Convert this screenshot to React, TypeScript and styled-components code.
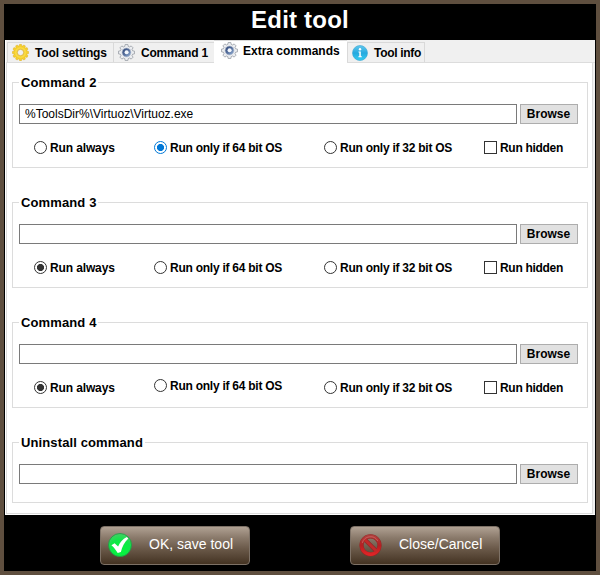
import React from 'react';
import styled, { createGlobalStyle } from 'styled-components';

const GlobalStyle = createGlobalStyle`
  * { box-sizing: border-box; }
  body { margin: 0; background: #5f4f3f; font-family: "Liberation Sans", Arial, sans-serif; color: #000; }
`;

const Frame = styled.div`
  width: 600px;
  height: 575px;
  border: 4px solid #5f4f3f;
  background: #000;
  display: flex;
  flex-direction: column;
`;

const Title = styled.h1`
  margin: 0;
  height: 36px;
  line-height: 32px;
  font-size: 24px;
  font-weight: bold;
  letter-spacing: 0.2px;
  color: #fff;
  text-align: center;
`;

const Body = styled.div`
  margin: 0 1px;
  height: 475px;
  background: #f0f0f0;
  display: flex;
  flex-direction: column;
  border-left: 1px solid #fff;
  border-bottom: 1px solid #fff;
`;

const TabBar = styled.div`
  height: 23px;
  padding-left: 1px;
  display: flex;
  align-items: flex-end;
`;

const Tab = styled.div<{ $width: number; $active?: boolean; $spacing: number }>`
  width: ${p => p.$width}px;
  height: ${p => (p.$active ? 23 : 21)}px;
  padding: 0 0 ${p => (p.$active ? 2 : 0)}px ${p => (p.$active ? 7 : 4)}px;
  display: flex;
  align-items: center;
  background: ${p => (p.$active ? '#fff' : '#f0f0f0')};
  border: 1px solid #d9d9d9;
  border-left-width: ${p => (p.$active ? 0 : 1)}px;
  border-right-width: ${p => (p.$active ? 0 : 1)}px;
  border-bottom-color: ${p => (p.$active ? '#fff' : '#d9d9d9')};
  margin-right: ${p => (p.$active ? 0 : -1)}px;
  font-size: 12px;
  font-weight: bold;
  letter-spacing: ${p => p.$spacing}px;
  white-space: nowrap;

  svg { flex: none; margin-right: ${p => (p.$active ? 5 : 6)}px; }
`;

const Panel = styled.div`
  flex: 1;
  margin-right: 2px;
  background: #fff;
  border: 1px solid #dcdcdc;
  border-top: 0;
  padding: 12px 4px 0 5px;
  display: flex;
  flex-direction: column;
  gap: 27px;
`;

const PanelTop = styled.div`
  height: 1px;
  margin-top: -1px;
  background: linear-gradient(90deg, #dcdcdc 208px, transparent 208px, transparent 341px, #dcdcdc 341px);
`;

const Group = styled.fieldset<{ $height: number }>`
  height: ${p => p.$height}px;
  min-width: 0;
  margin: 0;
  padding: 0 9px 0 6px;
  border: 1px solid #dcdcdc;
`;

const Legend = styled.legend<{ $spacing: number }>`
  height: 15px;
  line-height: 15px;
  padding: 0 2px;
  font-size: 13px;
  font-weight: bold;
  letter-spacing: ${p => p.$spacing}px;
`;

const PathRow = styled.div`
  display: flex;
  gap: 3px;
  padding-top: 14px;
`;

const PathInput = styled.input`
  width: 498px;
  height: 20px;
  margin: 0;
  padding: 0 5px;
  border: 1px solid #7a7a7a;
  border-radius: 0;
  outline: 0;
  background: #fff;
  color: #000;
  font: 12px "Liberation Sans", Arial, sans-serif;
  letter-spacing: 0;
`;

const Browse = styled.button`
  width: 58px;
  height: 20px;
  padding: 0 1px 0 0;
  border: 1px solid #adadad;
  background: #e1e1e1;
  color: #000;
  font: bold 12px "Liberation Sans", Arial, sans-serif;
  letter-spacing: 0;
`;

const Options = styled.div`
  height: 20px;
  margin-top: 14px;
  padding-left: 15px;
  display: grid;
  grid-template-columns: 120px 170px 160px 1fr;
  align-items: center;
`;

const Option = styled.label<{ $raised?: boolean; $spacing: number }>`
  display: flex;
  align-items: center;
  gap: 3px;
  height: 15px;
  margin-bottom: ${p => (p.$raised ? 5 : 1)}px;
  font-size: 12px;
  font-weight: bold;
  letter-spacing: ${p => p.$spacing}px;
  white-space: nowrap;
`;

const Radio = styled.span<{ $state: 'off' | 'on' | 'focus' }>`
  flex: none;
  width: 13px;
  height: 13px;
  border-radius: 50%;
  border: 1px solid ${p => (p.$state === 'focus' ? '#0078d7' : '#333')};
  background: ${p =>
    p.$state === 'off'
      ? '#fff'
      : `radial-gradient(circle, ${p.$state === 'focus' ? '#0078d7' : '#333'} 3.2px, #fff 3.9px)`};
`;

const Check = styled.span`
  flex: none;
  width: 13px;
  height: 13px;
  border: 1px solid #333;
  background: #fff;
`;

const Footer = styled.div`
  flex: 1;
  padding: 11px 0 0 96px;
  display: flex;
  gap: 100px;
`;

const ActionButton = styled.button<{ $spacing: number }>`
  width: 150px;
  height: 39px;
  padding: 0 0 0 7px;
  display: flex;
  align-items: center;
  gap: 17px;
  border: 1px solid #7d7166;
  border-radius: 4px;
  background: linear-gradient(#b0a193 0%, #8b7b6c 28%, #6b5a4a 58%, #443322 100%);
  color: #fff;
  font: 14px "Liberation Sans", Arial, sans-serif;
  letter-spacing: ${p => p.$spacing}px;
  white-space: nowrap;

  svg { flex: none; }
  span { padding-bottom: 3px; }
`;

const teeth = (count: number, inner: number, outer: number) => {
  const step = (Math.PI * 2) / count;
  const points: string[] = [];
  for (let i = 0; i < count; i++) {
    [[-0.34, inner], [-0.22, outer], [0.22, outer], [0.34, inner]].forEach(([offset, r]) => {
      const a = (i + offset) * step - Math.PI / 2;
      points.push(`${(8 + r * Math.cos(a)).toFixed(2)},${(8 + r * Math.sin(a)).toFixed(2)}`);
    });
  }
  return points.join(' ');
};

const YellowGear = () => (
  <svg width="17" height="17" viewBox="0 0 16 16">
    <polygon points={teeth(12, 6.4, 7.7)} fill="#f6d02d" stroke="#dfb22c" strokeWidth=".5" strokeLinejoin="round" />
    <circle cx="8" cy="8" r="4.4" fill="none" stroke="#f9dc4c" strokeWidth="1.3" />
    <circle cx="8" cy="8" r="3" fill="#f0f0f0" stroke="#d8ad2d" strokeWidth=".7" />
  </svg>
);

const SteelGear = () => (
  <svg width="17" height="17" viewBox="0 0 16 16">
    <defs>
      <linearGradient id="steel" x1="0" y1="0" x2="1" y2="1">
        <stop offset="0" stopColor="#2c4373" />
        <stop offset=".5" stopColor="#566f9d" />
        <stop offset="1" stopColor="#9bb8dc" />
      </linearGradient>
    </defs>
    <polygon points={teeth(8, 6, 7.6)} fill="#eceef1" stroke="#92979f" strokeWidth=".7" strokeLinejoin="round" />
    <circle cx="8" cy="8" r="4.2" fill="url(#steel)" stroke="#b9c2d0" strokeWidth=".6" />
    <circle cx="8.1" cy="7.8" r="1.9" fill="#f4f8fd" />
  </svg>
);

const InfoIcon = () => (
  <svg width="16" height="16" viewBox="0 0 16 16">
    <defs>
      <linearGradient id="info" x1="0" y1="0" x2="0" y2="1">
        <stop offset="0" stopColor="#64c8ed" />
        <stop offset=".5" stopColor="#25a9df" />
        <stop offset="1" stopColor="#35cdf2" />
      </linearGradient>
    </defs>
    <circle cx="8" cy="8" r="7.5" fill="url(#info)" stroke="#36a5d1" strokeWidth=".6" />
    <circle cx="8" cy="4.2" r="1.2" fill="#fff" />
    <path d="M6.5 6.5h2.3v4.7h1v1H6.4v-1h.9V7.5h-.8z" fill="#fff" />
  </svg>
);

const OkIcon = () => (
  <svg width="24" height="25" viewBox="0 0 24 25">
    <defs>
      <radialGradient id="ok" cx=".5" cy=".75" r=".75">
        <stop offset="0" stopColor="#00f83c" />
        <stop offset=".65" stopColor="#12e548" />
        <stop offset="1" stopColor="#45cf66" />
      </radialGradient>
    </defs>
    <circle cx="12" cy="12" r="11.5" fill="url(#ok)" stroke="#209844" strokeWidth=".8" />
    <path d="M3.4 12.2l3.2-2 3.5 3.3C12 9.4 14.6 6.2 18.8 4l1.5 1.4c-4 3.8-6.2 8.2-7.4 13.7l-3.2 1C8 17 6.2 14.5 3.4 12.2z" fill="#fff" />
  </svg>
);

const CancelIcon = () => (
  <svg width="24" height="25" viewBox="0 0 24 25">
    <defs>
      <linearGradient id="stop" x1="0" y1="0" x2="0" y2="1">
        <stop offset="0" stopColor="#ad3d3b" />
        <stop offset=".5" stopColor="#b51f22" />
        <stop offset="1" stopColor="#df2426" />
      </linearGradient>
    </defs>
    <g fill="none" stroke="#8f2926" strokeWidth="4.2">
      <circle cx="12.5" cy="12.3" r="9" />
      <path d="M6.5 6.3l12 12" />
    </g>
    <circle cx="12.5" cy="12.3" r="9" fill="none" stroke="url(#stop)" strokeWidth="3.4" />
    <path d="M6.5 6.3l12 12" stroke="#c12a2b" strokeWidth="3" />
    <path d="M4.3 9.9a8.5 8.5 0 0 1 15.5-2" fill="none" stroke="#cf6662" strokeWidth=".8" />
  </svg>
);

type Command = { name: string; path: string; selected: number; focused?: boolean; raised?: boolean };

const commands: Command[] = [
  { name: 'Command 2', path: '%ToolsDir%\\Virtuoz\\Virtuoz.exe', selected: 1, focused: true },
  { name: 'Command 3', path: '', selected: 0 },
  { name: 'Command 4', path: '', selected: 0, raised: true },
];

const modes = [
  { text: 'Run always', spacing: -0.13 },
  { text: 'Run only if 64 bit OS', spacing: -0.25 },
  { text: 'Run only if 32 bit OS', spacing: -0.25 },
];

const PathField = ({ value }: { value: string }) => (
  <PathRow>
    <PathInput defaultValue={value} spellCheck={false} />
    <Browse>Browse</Browse>
  </PathRow>
);

export default function App() {
  return (
    <>
      <GlobalStyle />
      <Frame>
        <Title>Edit tool</Title>
        <Body>
          <TabBar>
            <Tab $width={107} $spacing={-0.15}><YellowGear />Tool settings</Tab>
            <Tab $width={102} $spacing={-0.2}><SteelGear />Command 1</Tab>
            <Tab $width={133} $spacing={0} $active><SteelGear />Extra commands</Tab>
            <Tab $width={78} $spacing={-0.3}><InfoIcon />Tool info</Tab>
          </TabBar>
          <PanelTop />
          <Panel>
            {commands.map(c => (
              <Group key={c.name} $height={93}>
                <Legend $spacing={0.12}>{c.name}</Legend>
                <PathField value={c.path} />
                <Options>
                  {modes.map((m, i) => (
                    <Option key={m.text} $spacing={m.spacing} $raised={c.raised && i === 1}>
                      <Radio $state={c.selected !== i ? 'off' : c.focused ? 'focus' : 'on'} />
                      {m.text}
                    </Option>
                  ))}
                  <Option $spacing={-0.3}><Check />Run hidden</Option>
                </Options>
              </Group>
            ))}
            <Group $height={68}>
              <Legend $spacing={0.12}>Uninstall command</Legend>
              <PathField value="" />
            </Group>
          </Panel>
        </Body>
        <Footer>
          <ActionButton $spacing={0}><OkIcon /><span>OK, save tool</span></ActionButton>
          <ActionButton $spacing={0}><CancelIcon /><span>Close/Cancel</span></ActionButton>
        </Footer>
      </Frame>
    </>
  );
}
